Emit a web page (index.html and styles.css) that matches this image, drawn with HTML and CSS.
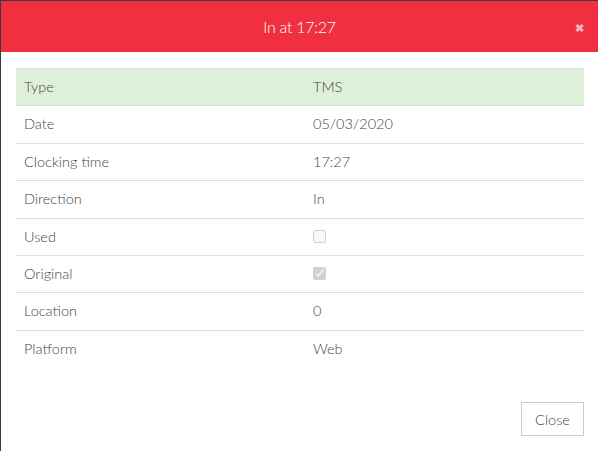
FILE: index.html
```html
<!DOCTYPE html>
<html>
<head>
<meta charset="utf-8">
<link rel="stylesheet" href="styles.css">
</head>
<body>
<div class="modal">
  <div class="modal-header">
    <h4 class="modal-title">In at 17:27</h4>
    <span class="close">&#10006;</span>
  </div>
  <div class="modal-body">
    <table class="details">
      <tr class="success"><td class="label">Type</td><td>TMS</td></tr>
      <tr><td class="label">Date</td><td>05/03/2020</td></tr>
      <tr><td class="label">Clocking time</td><td>17:27</td></tr>
      <tr><td class="label">Direction</td><td>In</td></tr>
      <tr><td class="label">Used</td><td><input type="checkbox" class="cb" disabled></td></tr>
      <tr><td class="label">Original</td><td><input type="checkbox" class="cb" checked disabled></td></tr>
      <tr><td class="label">Location</td><td>0</td></tr>
      <tr><td class="label">Platform</td><td>Web</td></tr>
    </table>
  </div>
  <div class="modal-footer">
    <button class="btn">Close</button>
  </div>
</div>
</body>
</html>
```
FILE: styles.css
```css
html, body {
  margin: 0;
  padding: 0;
  height: 100%;
  background: #3a3d40;
  overflow: hidden;
}
body {
  padding: 1px 0 0 1px;
  box-sizing: border-box;
  font-family: Lato, "Open Sans", sans-serif;
}
.modal {
  background: #fff;
  height: 100%;
  display: flex;
  flex-direction: column;
}
.modal-header {
  background: #f03040;
  height: 51px;
  display: flex;
  align-items: center;
  justify-content: center;
  position: relative;
  flex-shrink: 0;
}
.modal-title {
  margin: 0;
  color: #fff;
  font-weight: 300;
  font-size: 16px;
  letter-spacing: -0.3px;
}
.close {
  position: absolute;
  right: 14px;
  top: 21px;
  color: #f5b8c0;
  font-size: 11px;
  font-weight: bold;
  line-height: 1;
}
.modal-body {
  padding: 16px 14px 0 15px;
}
.details {
  width: 100%;
  border-collapse: collapse;
  font-size: 14.5px;
  font-weight: 300;
  color: #444;
}
.details td {
  border-top: 1px solid #ddd;
  padding: 8px 8px;
  line-height: 20.4px;
  height: 20.4px;
  vertical-align: middle;
}
.details td.label {
  width: 273px;
}
.details tr.success td {
  background: #dff0d8;
}
.cb {
  margin: 0;
  width: 13px;
  height: 13px;
  vertical-align: -1px;
}
.modal-footer {
  margin-top: auto;
  padding: 0 14px 15px 0;
  display: flex;
  justify-content: flex-end;
}
.btn {
  font-family: Lato, "Open Sans", sans-serif;
  font-weight: 300;
  font-size: 14.5px;
  color: #444;
  background: #fff;
  border: 1px solid #ccc;
  height: 34px;
  width: 63px;
  padding: 0;
}
```
